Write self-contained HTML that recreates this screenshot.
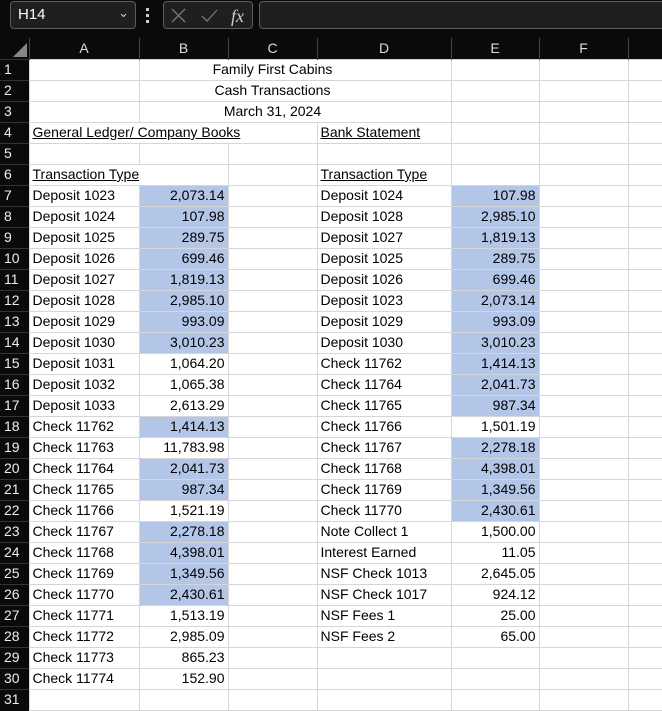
<!DOCTYPE html>
<html><head><meta charset="utf-8"><style>
*{margin:0;padding:0;box-sizing:border-box}
body{width:662px;height:701px;overflow:hidden;background:#0a0a0a;font-family:"Liberation Sans",sans-serif;position:relative}
.box{position:absolute;background:#1f1f1f;border:1px solid #5c5c5c;border-radius:4px;top:1px;height:28px}
.nb{left:10px;width:126px;color:#fff;font-size:15px;padding:4px 0 0 7px}
.grid{position:absolute;left:0;top:38px}
table{border-collapse:collapse;table-layout:fixed;width:668px}
td{height:21px;border:1px solid #d6d6d6;font-size:14px;color:#000;background:#fff;white-space:nowrap;overflow:hidden;padding:0 3px;line-height:19px}
tr.h td{background:#0a0a0a;color:#ddd;text-align:center;border:none;border-left:1px solid #444;height:21px}
td.r{background:#0a0a0a;color:#eee;text-align:left;border:none;border-top:1px solid #333;padding-left:4px}
td.n{text-align:right}
td.f{background:#b4c6e7}
td.v{overflow:visible;border-right:hidden}
.ctr{position:relative;overflow:visible;border-left:hidden;border-right:hidden}
.ctr span{position:absolute;left:-100px;right:-100px;top:0;text-align:center;z-index:2}
u{text-decoration:underline}
</style></head><body>
<div class="box nb">H14<span style="position:absolute;right:6px;top:3px;font-size:13px;color:#ccc">&#8964;</span></div>
<div style="position:absolute;left:146px;top:8px;width:3px;height:15px;background:repeating-linear-gradient(#ccc 0 3px,transparent 3px 6px)"></div>
<div class="box" style="left:163px;width:90px">
<svg width="90" height="28" style="position:absolute;left:0;top:0"><path d="M8 7l13 13M21 7L8 20" stroke="#777" stroke-width="1.3" fill="none"/><path d="M38 14l5 5 10-11" stroke="#777" stroke-width="1.3" fill="none"/><text x="67" y="20" fill="#ccc" font-family="Liberation Serif" font-style="italic" font-size="18">fx</text></svg></div>
<div class="box" style="left:259px;width:410px"></div>
<div class="grid"><table>
<colgroup><col style="width:29px"><col style="width:110px"><col style="width:89px"><col style="width:89px"><col style="width:134px"><col style="width:88px"><col style="width:89px"><col style="width:40px"></colgroup>
<tr class="h"><td style="border-left:none"></td><td>A</td><td>B</td><td>C</td><td>D</td><td>E</td><td>F</td><td></td></tr>
<tr><td class="r">1</td><td></td><td></td><td class="ctr"><span>Family First Cabins</span></td><td></td><td></td><td></td><td></td></tr>
<tr><td class="r">2</td><td></td><td></td><td class="ctr"><span>Cash Transactions</span></td><td></td><td></td><td></td><td></td></tr>
<tr><td class="r">3</td><td></td><td></td><td class="ctr"><span>March 31, 2024</span></td><td></td><td></td><td></td><td></td></tr>
<tr><td class="r">4</td><td colspan="3" class="v" style="border-right:1px solid #d6d6d6"><u>General Ledger/ Company Books</u></td><td><u>Bank Statement</u></td><td></td><td></td><td></td></tr>
<tr><td class="r">5</td><td></td><td></td><td></td><td></td><td></td><td></td><td></td></tr>
<tr><td class="r">6</td><td class="v"><u>Transaction Type</u></td><td></td><td></td><td><u>Transaction Type</u></td><td></td><td></td><td></td></tr>
<tr><td class="r">7</td><td>Deposit 1023</td><td class="n f">2,073.14</td><td></td><td>Deposit 1024</td><td class="n f">107.98</td><td></td><td></td></tr>
<tr><td class="r">8</td><td>Deposit 1024</td><td class="n f">107.98</td><td></td><td>Deposit 1028</td><td class="n f">2,985.10</td><td></td><td></td></tr>
<tr><td class="r">9</td><td>Deposit 1025</td><td class="n f">289.75</td><td></td><td>Deposit 1027</td><td class="n f">1,819.13</td><td></td><td></td></tr>
<tr><td class="r">10</td><td>Deposit 1026</td><td class="n f">699.46</td><td></td><td>Deposit 1025</td><td class="n f">289.75</td><td></td><td></td></tr>
<tr><td class="r">11</td><td>Deposit 1027</td><td class="n f">1,819.13</td><td></td><td>Deposit 1026</td><td class="n f">699.46</td><td></td><td></td></tr>
<tr><td class="r">12</td><td>Deposit 1028</td><td class="n f">2,985.10</td><td></td><td>Deposit 1023</td><td class="n f">2,073.14</td><td></td><td></td></tr>
<tr><td class="r">13</td><td>Deposit 1029</td><td class="n f">993.09</td><td></td><td>Deposit 1029</td><td class="n f">993.09</td><td></td><td></td></tr>
<tr><td class="r">14</td><td>Deposit 1030</td><td class="n f">3,010.23</td><td></td><td>Deposit 1030</td><td class="n f">3,010.23</td><td></td><td></td></tr>
<tr><td class="r">15</td><td>Deposit 1031</td><td class="n">1,064.20</td><td></td><td>Check 11762</td><td class="n f">1,414.13</td><td></td><td></td></tr>
<tr><td class="r">16</td><td>Deposit 1032</td><td class="n">1,065.38</td><td></td><td>Check 11764</td><td class="n f">2,041.73</td><td></td><td></td></tr>
<tr><td class="r">17</td><td>Deposit 1033</td><td class="n">2,613.29</td><td></td><td>Check 11765</td><td class="n f">987.34</td><td></td><td></td></tr>
<tr><td class="r">18</td><td>Check 11762</td><td class="n f">1,414.13</td><td></td><td>Check 11766</td><td class="n">1,501.19</td><td></td><td></td></tr>
<tr><td class="r">19</td><td>Check 11763</td><td class="n">11,783.98</td><td></td><td>Check 11767</td><td class="n f">2,278.18</td><td></td><td></td></tr>
<tr><td class="r">20</td><td>Check 11764</td><td class="n f">2,041.73</td><td></td><td>Check 11768</td><td class="n f">4,398.01</td><td></td><td></td></tr>
<tr><td class="r">21</td><td>Check 11765</td><td class="n f">987.34</td><td></td><td>Check 11769</td><td class="n f">1,349.56</td><td></td><td></td></tr>
<tr><td class="r">22</td><td>Check 11766</td><td class="n">1,521.19</td><td></td><td>Check 11770</td><td class="n f">2,430.61</td><td></td><td></td></tr>
<tr><td class="r">23</td><td>Check 11767</td><td class="n f">2,278.18</td><td></td><td>Note Collect 1</td><td class="n">1,500.00</td><td></td><td></td></tr>
<tr><td class="r">24</td><td>Check 11768</td><td class="n f">4,398.01</td><td></td><td>Interest Earned</td><td class="n">11.05</td><td></td><td></td></tr>
<tr><td class="r">25</td><td>Check 11769</td><td class="n f">1,349.56</td><td></td><td>NSF Check 1013</td><td class="n">2,645.05</td><td></td><td></td></tr>
<tr><td class="r">26</td><td>Check 11770</td><td class="n f">2,430.61</td><td></td><td>NSF Check 1017</td><td class="n">924.12</td><td></td><td></td></tr>
<tr><td class="r">27</td><td>Check 11771</td><td class="n">1,513.19</td><td></td><td>NSF Fees 1</td><td class="n">25.00</td><td></td><td></td></tr>
<tr><td class="r">28</td><td>Check 11772</td><td class="n">2,985.09</td><td></td><td>NSF Fees 2</td><td class="n">65.00</td><td></td><td></td></tr>
<tr><td class="r">29</td><td>Check 11773</td><td class="n">865.23</td><td></td><td></td><td></td><td></td><td></td></tr>
<tr><td class="r">30</td><td>Check 11774</td><td class="n">152.90</td><td></td><td></td><td></td><td></td><td></td></tr>
<tr><td class="r">31</td><td></td><td></td><td></td><td></td><td></td><td></td><td></td></tr>
</table></div>
<svg width="14" height="14" style="position:absolute;left:13px;top:43px"><path d="M14 0V14H0Z" fill="#888"/></svg>
</body></html>
